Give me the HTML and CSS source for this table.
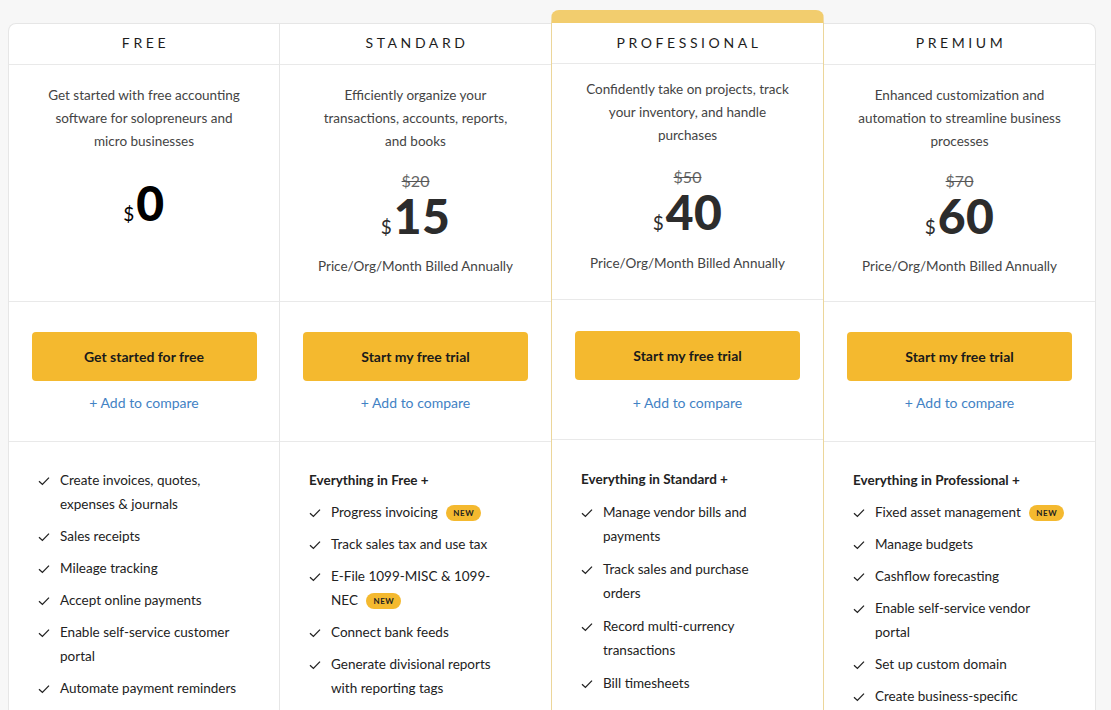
FILE: index.html
```html
<!DOCTYPE html>
<html lang="en">
<head>
<meta charset="utf-8">
<title>Pricing</title>
<link rel="stylesheet" href="styles.css">
</head>
<body>
<div class="plans">
  <section class="plan plan-first">
    <div class="plan-head">FREE</div>
    <div class="plan-intro">
      <p class="desc">Get started with free accounting software for solopreneurs and micro businesses</p>
      <div class="price price-free"><span class="cur">$</span><span class="amount">0</span></div>
    </div>
    <div class="plan-cta">
      <button class="btn">Get started for free</button>
      <a class="compare" href="#">+ Add to compare</a>
    </div>
    <ul class="features">
      <li><svg class="check" viewBox="0 0 12 10"><path d="M1 5.2 L4.4 8.4 L11 1.6"/></svg><span>Create invoices, quotes, expenses &amp; journals</span></li>
      <li><svg class="check" viewBox="0 0 12 10"><path d="M1 5.2 L4.4 8.4 L11 1.6"/></svg><span>Sales receipts</span></li>
      <li><svg class="check" viewBox="0 0 12 10"><path d="M1 5.2 L4.4 8.4 L11 1.6"/></svg><span>Mileage tracking</span></li>
      <li><svg class="check" viewBox="0 0 12 10"><path d="M1 5.2 L4.4 8.4 L11 1.6"/></svg><span>Accept online payments</span></li>
      <li><svg class="check" viewBox="0 0 12 10"><path d="M1 5.2 L4.4 8.4 L11 1.6"/></svg><span>Enable self-service customer portal</span></li>
      <li><svg class="check" viewBox="0 0 12 10"><path d="M1 5.2 L4.4 8.4 L11 1.6"/></svg><span>Automate payment reminders</span></li>
    </ul>
  </section>

  <section class="plan">
    <div class="plan-head">STANDARD</div>
    <div class="plan-intro">
      <p class="desc">Efficiently organize your transactions, accounts, reports, and books</p>
      <div class="old-price">$20</div>
      <div class="price"><span class="cur">$</span><span class="amount">15</span></div>
      <p class="billing">Price/Org/Month Billed Annually</p>
    </div>
    <div class="plan-cta">
      <button class="btn">Start my free trial</button>
      <a class="compare" href="#">+ Add to compare</a>
    </div>
    <ul class="features">
      <li class="features-title">Everything in Free +</li>
      <li><svg class="check" viewBox="0 0 12 10"><path d="M1 5.2 L4.4 8.4 L11 1.6"/></svg><span>Progress invoicing <em class="badge">NEW</em></span></li>
      <li><svg class="check" viewBox="0 0 12 10"><path d="M1 5.2 L4.4 8.4 L11 1.6"/></svg><span>Track sales tax and use tax</span></li>
      <li><svg class="check" viewBox="0 0 12 10"><path d="M1 5.2 L4.4 8.4 L11 1.6"/></svg><span>E-File 1099-MISC &amp; 1099-<br>NEC <em class="badge">NEW</em></span></li>
      <li><svg class="check" viewBox="0 0 12 10"><path d="M1 5.2 L4.4 8.4 L11 1.6"/></svg><span>Connect bank feeds</span></li>
      <li><svg class="check" viewBox="0 0 12 10"><path d="M1 5.2 L4.4 8.4 L11 1.6"/></svg><span>Generate divisional reports with reporting tags</span></li>
    </ul>
  </section>

  <section class="plan plan-featured">
    <div class="plan-head">PROFESSIONAL</div>
    <div class="plan-intro">
      <p class="desc">Confidently take on projects, track your inventory, and handle purchases</p>
      <div class="old-price">$50</div>
      <div class="price"><span class="cur">$</span><span class="amount">40</span></div>
      <p class="billing">Price/Org/Month Billed Annually</p>
    </div>
    <div class="plan-cta">
      <button class="btn">Start my free trial</button>
      <a class="compare" href="#">+ Add to compare</a>
    </div>
    <ul class="features">
      <li class="features-title">Everything in Standard +</li>
      <li><svg class="check" viewBox="0 0 12 10"><path d="M1 5.2 L4.4 8.4 L11 1.6"/></svg><span>Manage vendor bills and payments</span></li>
      <li><svg class="check" viewBox="0 0 12 10"><path d="M1 5.2 L4.4 8.4 L11 1.6"/></svg><span>Track sales and purchase orders</span></li>
      <li><svg class="check" viewBox="0 0 12 10"><path d="M1 5.2 L4.4 8.4 L11 1.6"/></svg><span>Record multi-currency transactions</span></li>
      <li><svg class="check" viewBox="0 0 12 10"><path d="M1 5.2 L4.4 8.4 L11 1.6"/></svg><span>Bill timesheets</span></li>
    </ul>
  </section>

  <section class="plan plan-last">
    <div class="plan-head">PREMIUM</div>
    <div class="plan-intro">
      <p class="desc">Enhanced customization and automation to streamline business processes</p>
      <div class="old-price">$70</div>
      <div class="price"><span class="cur">$</span><span class="amount">60</span></div>
      <p class="billing">Price/Org/Month Billed Annually</p>
    </div>
    <div class="plan-cta">
      <button class="btn">Start my free trial</button>
      <a class="compare" href="#">+ Add to compare</a>
    </div>
    <ul class="features">
      <li class="features-title">Everything in Professional +</li>
      <li><svg class="check" viewBox="0 0 12 10"><path d="M1 5.2 L4.4 8.4 L11 1.6"/></svg><span class="nowrap">Fixed asset management <em class="badge">NEW</em></span></li>
      <li><svg class="check" viewBox="0 0 12 10"><path d="M1 5.2 L4.4 8.4 L11 1.6"/></svg><span>Manage budgets</span></li>
      <li><svg class="check" viewBox="0 0 12 10"><path d="M1 5.2 L4.4 8.4 L11 1.6"/></svg><span>Cashflow forecasting</span></li>
      <li><svg class="check" viewBox="0 0 12 10"><path d="M1 5.2 L4.4 8.4 L11 1.6"/></svg><span>Enable self-service vendor portal</span></li>
      <li><svg class="check" viewBox="0 0 12 10"><path d="M1 5.2 L4.4 8.4 L11 1.6"/></svg><span>Set up custom domain</span></li>
      <li><svg class="check" viewBox="0 0 12 10"><path d="M1 5.2 L4.4 8.4 L11 1.6"/></svg><span>Create business-specific workflows</span></li>
    </ul>
  </section>
</div>
</body>
</html>
```

FILE: styles.css
```css
* { box-sizing: border-box; }

html, body {
  height: 100%;
}

body {
  margin: 0;
  padding: 23px 0 0 8px;
  background: #f7f7f7;
  font-family: "Lato", "Liberation Sans", sans-serif;
  color: #222;
  overflow: hidden;
}

.plans {
  display: grid;
  grid-template-columns: 272px 272px 272px 272px;
  width: 1088px;
  min-height: 800px;
}

.plan {
  background: #fff;
  border-top: 1px solid #e6e6e6;
  border-right: 1px solid #e6e6e6;
  display: flex;
  flex-direction: column;
}

.plan-first {
  border-left: 1px solid #e6e6e6;
  border-top-left-radius: 8px;
}

.plan-last {
  border-top-right-radius: 8px;
}

.plan-featured {
  margin-top: -13px;
  margin-left: -1px;
  border-top: 13px solid #f2cd6e;
  border-left: 1px solid #ecd69a;
  border-right: 1px solid #ecd69a;
  border-radius: 8px 8px 0 0;
  position: relative;
}

.plan-head {
  height: 41px;
  border-bottom: 1px solid #e9e9e9;
  display: flex;
  align-items: center;
  justify-content: center;
  font-size: 14px;
  letter-spacing: 3.6px;
  color: #1d1d1d;
  padding: 0 0 4px 3px;
}

.plan-featured .plan-head {
  padding-bottom: 2px;
}

.plan-intro {
  height: 237px;
  border-bottom: 1px solid #e9e9e9;
  display: flex;
  flex-direction: column;
  align-items: center;
  padding: 19px 20px 0;
  text-align: center;
}

.plan-featured .plan-intro {
  height: 236px;
  padding-top: 14px;
}

.desc {
  margin: 0;
  max-width: 206px;
  font-size: 13.5px;
  line-height: 23px;
  color: #444;
}

.plan-featured .desc {
  max-width: 212px;
}

.old-price {
  margin-top: 18px;
  font-size: 16px;
  line-height: 20px;
  color: #666;
  text-decoration: line-through;
  text-decoration-color: #555;
}

.plan-featured .old-price {
  margin-top: 20px;
}

.price {
  display: flex;
  align-items: baseline;
  line-height: 48px;
  margin-top: 1px;
  color: #2c2c2c;
}

.price-free {
  margin-top: 26px;
  color: #000;
}

.cur {
  font-size: 19px;
  font-weight: 400;
  margin-right: 2px;
}

.amount {
  font-size: 48px;
  font-weight: 900;
  letter-spacing: 0.5px;
}

.billing {
  margin: 5px 0 0;
  font-size: 13.5px;
  line-height: 20px;
  color: #444;
}

.plan-featured .billing {
  margin-top: 6px;
}

.plan-cta {
  height: 140px;
  border-bottom: 1px solid #e9e9e9;
  display: flex;
  flex-direction: column;
  align-items: center;
  padding-top: 30px;
}

.plan-featured .plan-cta {
  padding-top: 31px;
}

.btn {
  width: 225px;
  height: 49px;
  border: 0;
  border-radius: 4px;
  background: #f4b92f;
  font-family: inherit;
  font-size: 14px;
  font-weight: 700;
  color: #1a1a1a;
  cursor: pointer;
}

.compare {
  margin-top: 12px;
  font-size: 14px;
  line-height: 20px;
  color: #4282c4;
  text-decoration: none;
}

.plan-featured .compare {
  margin-top: 13px;
}

.features {
  list-style: none;
  margin: 0;
  padding: 26px 34px 0 28px;
}

.plan-featured .features {
  padding-top: 27px;
}

.features li {
  display: flex;
  align-items: flex-start;
  font-size: 13.5px;
  line-height: 24px;
  color: #222;
  margin-bottom: 8px;
}

.plan-featured .features li {
  line-height: 24.5px;
}

.features .features-title {
  font-weight: 700;
  margin-left: 1px;
}

.nowrap {
  white-space: nowrap;
}

.check {
  flex: none;
  width: 12px;
  height: 10px;
  margin: 8px 10px 0 1px;
  fill: none;
  stroke: #222;
  stroke-width: 1.3;
}

.badge {
  display: inline-block;
  vertical-align: 1px;
  margin-left: 5px;
  padding: 0 7px;
  height: 16px;
  line-height: 16px;
  border-radius: 8px;
  background: #f4b92f;
  font-style: normal;
  font-size: 8px;
  font-weight: 700;
  letter-spacing: 0.6px;
  color: #222;
}
```
